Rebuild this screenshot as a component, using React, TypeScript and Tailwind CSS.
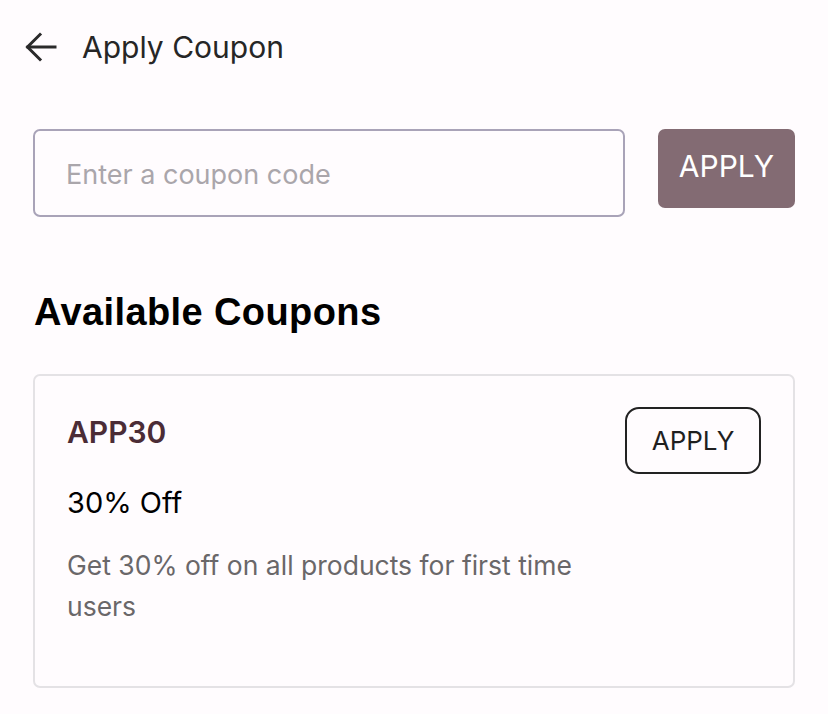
import { useState } from 'react';

const COUPONS = [
  { code: 'APP30', title: '30% Off', description: 'Get 30% off on all products for first time users' },
];

export default function App() {
  const [code, setCode] = useState('');

  return (
    <div className="min-h-screen bg-[#fffcfe] font-['Inter',sans-serif] text-[#1f1f1f]">
      {/* Header */}
      <div className="flex items-center h-[94px] pl-[24px] gap-[24px]">
        <button className="p-0">
          <svg width="34" height="34" viewBox="0 0 34 34" fill="none" stroke="#2a2a2a" strokeWidth="3" strokeLinecap="square">
            <path d="M4 17h27" />
            <path d="M16 4.5 3.5 17 16 29.5" />
          </svg>
        </button>
        <h1 className="text-[30px] font-normal text-[#262626]">Apply Coupon</h1>
      </div>

      {/* Input row */}
      <div className="flex items-start gap-[33px] px-[33px] mt-[35px]">
        <input
          className="flex-1 h-[88px] border-2 border-[#a9a3b8] rounded-[7px] px-[31px] pt-[3px] text-[27px] bg-transparent placeholder:text-[#aaa6ab] focus:outline-none"
          placeholder="Enter a coupon code"
          value={code}
          onChange={e => setCode(e.target.value)}
        />
        <button className="w-[137px] h-[79px] bg-[#836b73] text-white rounded-[7px] text-[30px] font-normal pb-[4px]">
          APPLY
        </button>
      </div>

      {/* Available coupons */}
      <h2 className="font-['Liberation_Sans',sans-serif] font-bold text-[38px] tracking-[0.4px] text-black px-[34px] mt-[73px] leading-[44px]">
        Available Coupons
      </h2>

      <div className="px-[33px] mt-[40px] pb-6 space-y-4">
        {COUPONS.map(c => (
          <div key={c.code} className="border-2 border-[#e4e2e5] rounded-[7px] h-[314px] pl-[32px] pr-[32px] pt-[31px] flex justify-between">
            <div className="flex-1 min-w-0 pt-[5px]">
              <p className="text-[30px] font-semibold text-[#4b2c36] leading-[40px]">{c.code}</p>
              <p className="text-[29px] text-black leading-[40px] mt-[31px]">{c.title}</p>
              <p className="text-[26.5px] text-[#6a6769] leading-[41px] mt-[22px] max-w-[540px]">{c.description}</p>
            </div>
            <button className="w-[136px] h-[67px] border-2 border-[#222] rounded-[14px] text-[26px] text-[#1f1f1f] shrink-0">
              APPLY
            </button>
          </div>
        ))}
      </div>
    </div>
  );
}
